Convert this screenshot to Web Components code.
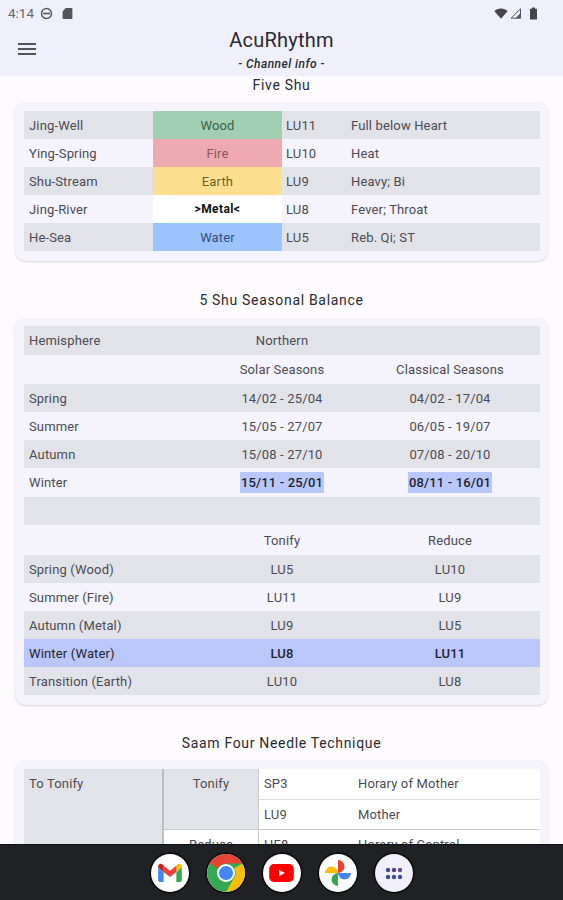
<!DOCTYPE html>
<html>
<head>
<meta charset="utf-8">
<title>AcuRhythm</title>
<style>
  html, body { margin: 0; height: 100%; }
  body {
    width: 563px;
    height: 900px;
    overflow: hidden;
    display: flex;
    flex-direction: column;
    background: #fefbff;
    font-family: Roboto, "Liberation Sans", sans-serif;
    color: #1b1b1f;
  }
  main { flex: 1; min-height: 0; overflow: hidden; }
</style>
</head>
<body>
<status-bar></status-bar>
<app-bar title="AcuRhythm" subtitle="- Channel info -"></app-bar>
<main>
  <section-title style="--top:-3px">Five Shu</section-title>
  <info-card style="--mt:5px">
    <five-shu></five-shu>
  </info-card>
  <section-title style="--top:27px">5 Shu Seasonal Balance</section-title>
  <info-card style="--mt:6px;--pt:8px">
    <seasonal-balance></seasonal-balance>
  </info-card>
  <section-title style="--top:26px">Saam Four Needle Technique</section-title>
  <info-card style="--mt:5px">
    <saam-table></saam-table>
  </info-card>
</main>
<app-dock></app-dock>

<script>
class StatusBar extends HTMLElement {
  constructor() {
    super();
    this.attachShadow({ mode: 'open' });
    this.shadowRoot.innerHTML = `
      <style>
        :host {
          display: flex;
          align-items: center;
          height: 26px;
          flex: none;
          padding: 0 25px 0 8px;
          background: #f0f0fc;
          color: #66676d;
          font-size: 13.5px;
        }
        .left { display: flex; align-items: center; gap: 6px; flex: 1; }
        .right { display: flex; align-items: center; gap: 2px; }
        svg { display: block; }
      </style>
      <div class="left">
        <span>4:14</span>
        <svg width="13" height="13" viewBox="0 0 13 13"><circle cx="6.500" cy="6.500" r="5" fill="none" stroke="#55565c" stroke-width="1.400"/><rect x="3" y="5.700" width="7" height="1.600" fill="#55565c"/></svg>
        <svg width="11" height="13" viewBox="0 0 11 13" style="margin-left:3px"><path d="M3.800 1H9.500a.9.9 0 0 1 .9.900V11.100a.9.9 0 0 1-.9.900H1.500a.9.9 0 0 1-.9-.9V4.200z" fill="#55565c"/></svg>
      </div>
      <div class="right">
        <svg width="14" height="11" viewBox="0 0 14 11"><path d="M0.300 3C4.100-.5 9.900-.5 13.700 3L7 10.800z" fill="#44454b"/></svg>
        <svg width="11" height="11" viewBox="0 0 11 11"><path d="M10.500 .8V10.200H1z" fill="none" stroke="#55565c" stroke-width="1"/><path d="M10.500 5V10.200H5.500z" fill="#55565c"/></svg>
        <svg width="9" height="13" viewBox="0 0 9 13" style="margin-left:6px"><path d="M3 .6H6V1.800H7.400a.6.6 0 0 1 .6.6V12a.6.6 0 0 1-.6.6H1.600A.6.6 0 0 1 1 12V2.400a.6.6 0 0 1 .6-.6H3z" fill="#44454b"/></svg>
      </div>
    `;
  }
}

class AppBar extends HTMLElement {
  constructor() {
    super();
    this.attachShadow({ mode: 'open' });
  }

  connectedCallback() {
    this.shadowRoot.innerHTML = `
      <style>
        :host {
          display: grid;
          grid-template-columns: 54px 1fr 54px;
          align-items: start;
          height: 50px;
          flex: none;
          background: #f0f0fc;
        }
        .menu { display: flex; justify-content: center; padding-top: 17px; }
        .titles { text-align: center; }
        h1 { margin: 0; font-size: 20px; font-weight: 400; line-height: 28px; letter-spacing: .25px; color: #2a2a2f; }
        p { margin: 2px 0 0; font-size: 12px; line-height: 16px; font-style: italic; font-weight: 500; letter-spacing: .45px; color: #2a2a2f; }
      </style>
      <div class="menu">
        <svg width="18" height="12" viewBox="0 0 18 12"><path d="M0 1H18M0 6H18M0 11H18" stroke="#1f1f23" stroke-width="1.700"/></svg>
      </div>
      <div class="titles">
        <h1>${this.getAttribute('title')}</h1>
        <p>${this.getAttribute('subtitle')}</p>
      </div>
    `;
  }
}

class SectionTitle extends HTMLElement {
  constructor() {
    super();
    this.attachShadow({ mode: 'open' });
    this.shadowRoot.innerHTML = `
      <style>
        :host {
          display: block;
          margin-top: var(--top, 0);
          line-height: 24px;
          text-align: center;
          font-size: 14px;
          letter-spacing: .68px;
          color: #2a2a2f;
        }
      </style>
      <slot></slot>
    `;
  }
}

class InfoCard extends HTMLElement {
  constructor() {
    super();
    this.attachShadow({ mode: 'open' });
    this.shadowRoot.innerHTML = `
      <style>
        :host {
          display: block;
          margin: var(--mt, 0) 15px 0;
          padding: var(--pt, 9px) 8px 10px 9px;
          background: #f5f3fb;
          border-radius: 11px;
          box-shadow: 0 1px 2px rgba(0,0,0,.16);
        }
      </style>
      <slot></slot>
    `;
  }
}

// shared look of the striped tables
const tableStyle = `
  :host { display: block; font-size: 13px; letter-spacing: .15px; color: #4b4c53; }
  .row { display: grid; align-items: center; height: 28px; }
  .row > span { padding: 0 5px; white-space: nowrap; }
  .row.odd { background: #e2e2e9; }
  .c { text-align: center; }
`;

class FiveShu extends HTMLElement {
  constructor() {
    super();
    this.attachShadow({ mode: 'open' });
    const rows = [
      ['Jing-Well', 'Wood', 'LU11', 'Full below Heart', '#a2cfb3', '#37634a'],
      ['Ying-Spring', 'Fire', 'LU10', 'Heat', '#eeaab0', '#8b5560'],
      ['Shu-Stream', 'Earth', 'LU9', 'Heavy; Bi', '#fce08f', '#6d5f2b'],
      ['Jing-River', '&gt;Metal&lt;', 'LU8', 'Fever; Throat', '#ffffff', '#111'],
      ['He-Sea', 'Water', 'LU5', 'Reb. Qi; ST', '#9cc3fb', '#2f4f7d']
    ];
    const html = rows.map((r, i) => `
      <div class="row ${i % 2 ? '' : 'odd'}">
        <span>${r[0]}</span>
        <span class="c el ${i === 3 ? 'now' : ''}" style="background:${r[4]};color:${r[5]}">${r[1]}</span>
        <span class="n">${r[2]}</span>
        <span class="n">${r[3]}</span>
      </div>`).join('');
    this.shadowRoot.innerHTML = `
      <style>
        ${tableStyle}
        .row { grid-template-columns: 129px 129px 65px 1fr; }
        .row > span.el { align-self: stretch; display: flex; align-items: center; justify-content: center; }
        .row > span.n { padding-left: 4px; }
        .now { font-weight: 700; font-size: 12px; letter-spacing: .4px; }
      </style>
      ${html}
    `;
  }
}

class SeasonalBalance extends HTMLElement {
  constructor() {
    super();
    this.attachShadow({ mode: 'open' });
    const row = (a, b, c, cls) => `
      <div class="row ${cls || ''}">
        <span>${a}</span><span class="c">${b}</span><span class="c">${c}</span>
      </div>`;
    this.shadowRoot.innerHTML = `
      <style>
        ${tableStyle}
        .row { grid-template-columns: 174px 168px 168px 1fr; }
        .tall { height: 29px; }
        .head { height: 30px; }
        mark { background: #b9c8fb; color: #1f2430; font-weight: 500; padding: 3px 1px; }
        .now { background: #bac7fb; }
        .now span { color: #1f2430; }
        .now .c { font-weight: 500; }
      </style>
      ${row('Hemisphere', 'Northern', '', 'odd tall')}
      ${row('', 'Solar Seasons', 'Classical Seasons', 'tall')}
      ${row('Spring', '14/02 - 25/04', '04/02 - 17/04', 'odd')}
      ${row('Summer', '15/05 - 27/07', '06/05 - 19/07')}
      ${row('Autumn', '15/08 - 27/10', '07/08 - 20/10', 'odd')}
      ${row('Winter', '<mark>15/11 - 25/01</mark>', '<mark>08/11 - 16/01</mark>', 'tall')}
      ${row('', '', '', 'odd')}
      ${row('', 'Tonify', 'Reduce', 'head')}
      ${row('Spring (Wood)', 'LU5', 'LU10', 'odd')}
      ${row('Summer (Fire)', 'LU11', 'LU9')}
      ${row('Autumn (Metal)', 'LU9', 'LU5', 'odd')}
      ${row('Winter (Water)', 'LU8', 'LU11', 'now')}
      ${row('Transition (Earth)', 'LU10', 'LU8', 'odd')}
    `;
  }
}

class SaamTable extends HTMLElement {
  constructor() {
    super();
    this.attachShadow({ mode: 'open' });
    this.shadowRoot.innerHTML = `
      <style>
        :host {
          display: grid;
          grid-template-columns: 140px 95px 94px 1fr;
          grid-template-rows: 31px 30px 30px 30px;
          font-size: 13px;
          letter-spacing: .15px;
          color: #4b4c53;
        }
        div { padding: 7px 5px; box-sizing: border-box; white-space: nowrap; line-height: 16px; }
        .head { grid-row: span 4; background: #e2e2e9; border-right: 2px solid #bdbdc4; }
        .op { grid-row: span 2; background: #e2e2e9; text-align: center; border-right: 1px solid #c8c8cf; border-bottom: 1px solid #c8c8cf; }
        .op.light { background: #fff; }
        .cell { background: #fff; border-bottom: 1px solid #dcdce2; }
        .end { border-bottom-color: #c8c8cf; }
      </style>
      <div class="head">To Tonify</div>
      <div class="op">Tonify</div>
      <div class="cell">SP3</div><div class="cell">Horary of Mother</div>
      <div class="cell end">LU9</div><div class="cell end">Mother</div>
      <div class="op light">Reduce</div>
      <div class="cell">HE8</div><div class="cell">Horary of Control</div>
      <div class="cell">PC8</div><div class="cell">Control</div>
    `;
  }
}

class AppDock extends HTMLElement {
  constructor() {
    super();
    this.attachShadow({ mode: 'open' });
    this.shadowRoot.innerHTML = `
      <style>
        :host {
          display: flex;
          justify-content: center;
          align-items: center;
          gap: 18px;
          height: 56px;
          flex: none;
          background: #202124;
          box-sizing: border-box;
          padding-top: 1px;
          border-top: 1px solid #111;
        }
        .ic {
          width: 38px;
          height: 38px;
          border-radius: 50%;
          background: #fff;
          display: flex;
          align-items: center;
          justify-content: center;
          overflow: hidden;
          box-shadow: 0 0 0 1.500px #0c0c0e;
        }
        .ic.grid { background: #f1f0fa; }
        svg { display: block; }
      </style>
      <div class="ic">
        <svg width="26" height="20" viewBox="0 0 28 22">
          <path d="M1 5V19a2 2 0 0 0 2 2H7V10z" fill="#4285f4"/>
          <path d="M27 5V19a2 2 0 0 1-2 2H21V10z" fill="#34a853"/>
          <path d="M21 2.500V10l6-5V3.500C27 1 24 0 22.500 1.300z" fill="#fbbc04"/>
          <path d="M7 10V3L14 8.500 21 3V10L14 15.500z" fill="#ea4335"/>
          <path d="M1 5V3.500C1 1 4 0 5.500 1.300L7 2.500V10z" fill="#c5221f"/>
        </svg>
      </div>
      <div class="ic">
        <svg width="38" height="38" viewBox="0 0 38 38">
          <circle cx="19" cy="19" r="19" fill="#34a853"/>
          <path d="M19 0A19 19 0 0 1 35.500 9.500L19 9.500A9.500 9.500 0 0 0 10.800 14.200L2.600 9.500A19 19 0 0 1 19 0z" fill="#ea4335"/>
          <path d="M35.500 9.500A19 19 0 0 1 19 38L27.200 23.800A9.500 9.500 0 0 0 27.200 14.200z" fill="#fbbc04"/>
          <circle cx="19" cy="19" r="9" fill="#fff"/>
          <circle cx="19" cy="19" r="7" fill="#4285f4"/>
        </svg>
      </div>
      <div class="ic">
        <svg width="25" height="18" viewBox="0 0 26 19">
          <rect width="26" height="19" rx="5" fill="#f00"/>
          <path d="M10.500 6V13L16.500 9.500z" fill="#fff"/>
        </svg>
      </div>
      <div class="ic">
        <svg width="28" height="28" viewBox="0 0 28 28">
          <path d="M14 14V1A6.500 6.500 0 0 1 14 14z" fill="#ea4335"/>
          <path d="M14 14H27A6.500 6.500 0 0 1 14 14z" fill="#4285f4"/>
          <path d="M14 14V27A6.500 6.500 0 0 1 14 14z" fill="#34a853"/>
          <path d="M14 14H1A6.500 6.500 0 0 1 14 14z" fill="#fbbc04"/>
        </svg>
      </div>
      <div class="ic grid">
        <svg width="18" height="13" viewBox="0 0 18 13">
          <circle cx="3" cy="3" r="2.200" fill="#3c4a9e"/><circle cx="9" cy="3" r="2.200" fill="#5b3a8c"/><circle cx="15" cy="3" r="2.200" fill="#6e4a8e"/>
          <circle cx="3" cy="10" r="2.200" fill="#3c4a9e"/><circle cx="9" cy="10" r="2.200" fill="#3c4a9e"/><circle cx="15" cy="10" r="2.200" fill="#3c4a9e"/>
        </svg>
      </div>
    `;
  }
}

customElements.define('status-bar', StatusBar);
customElements.define('app-bar', AppBar);
customElements.define('section-title', SectionTitle);
customElements.define('info-card', InfoCard);
customElements.define('five-shu', FiveShu);
customElements.define('seasonal-balance', SeasonalBalance);
customElements.define('saam-table', SaamTable);
customElements.define('app-dock', AppDock);
</script>
</body>
</html>
